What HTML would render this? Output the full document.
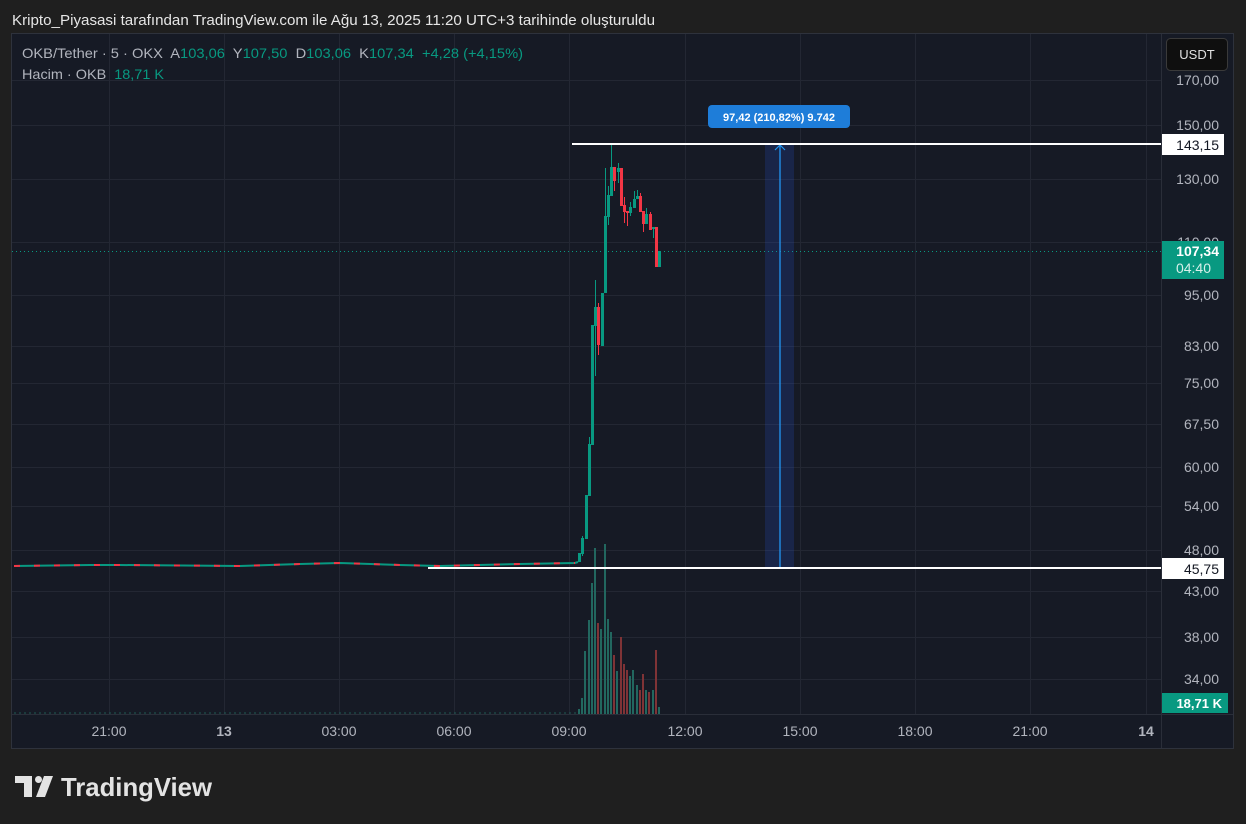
<!DOCTYPE html>
<html><head><meta charset="utf-8"><style>
html,body{margin:0;padding:0;background:#1f1f1f;}
svg{display:block;font-family:"Liberation Sans",sans-serif;}
text{white-space:pre;}
</style></head><body>
<svg width="1246" height="824" viewBox="0 0 1246 824" xmlns="http://www.w3.org/2000/svg" xml:space="preserve">
<rect width="1246" height="824" fill="#1f1f1f"/>
<text x="12" y="25" font-size="15" fill="#e6e6e6" textLength="643" lengthAdjust="spacingAndGlyphs">Kripto_Piyasasi tarafından TradingView.com ile Ağu 13, 2025 11:20 UTC+3 tarihinde oluşturuldu</text>
<rect x="11.5" y="33.5" width="1222" height="715" fill="#161a25" stroke="#2e323c"/>
<g stroke="#232733" stroke-width="1">
<line x1="12" x2="1161" y1="80.5" y2="80.5"/><line x1="12" x2="1161" y1="125.5" y2="125.5"/>
<line x1="12" x2="1161" y1="179.5" y2="179.5"/><line x1="12" x2="1161" y1="242.5" y2="242.5"/>
<line x1="12" x2="1161" y1="295.5" y2="295.5"/><line x1="12" x2="1161" y1="346.5" y2="346.5"/>
<line x1="12" x2="1161" y1="383.5" y2="383.5"/><line x1="12" x2="1161" y1="424.5" y2="424.5"/>
<line x1="12" x2="1161" y1="467.5" y2="467.5"/><line x1="12" x2="1161" y1="506.5" y2="506.5"/>
<line x1="12" x2="1161" y1="550.5" y2="550.5"/><line x1="12" x2="1161" y1="591.5" y2="591.5"/>
<line x1="12" x2="1161" y1="637.5" y2="637.5"/><line x1="12" x2="1161" y1="679.5" y2="679.5"/>
<line y1="34" y2="714" x1="109.5" x2="109.5"/><line y1="34" y2="714" x1="224.5" x2="224.5"/>
<line y1="34" y2="714" x1="339.5" x2="339.5"/><line y1="34" y2="714" x1="454.5" x2="454.5"/>
<line y1="34" y2="714" x1="569.5" x2="569.5"/><line y1="34" y2="714" x1="685.5" x2="685.5"/>
<line y1="34" y2="714" x1="800.5" x2="800.5"/><line y1="34" y2="714" x1="915.5" x2="915.5"/>
<line y1="34" y2="714" x1="1030.5" x2="1030.5"/><line y1="34" y2="714" x1="1146.5" x2="1146.5"/>
</g>
<line x1="1161.5" x2="1161.5" y1="34" y2="748" stroke="#2a2e39"/>
<line x1="12" x2="1233" y1="714.5" y2="714.5" stroke="#2a2e39"/>
<text x="22" y="58" font-size="14" fill="#b2b5be" textLength="501" lengthAdjust="spacingAndGlyphs">OKB/Tether · 5 · OKX  A<tspan fill="#089981">103,06</tspan>  Y<tspan fill="#089981">107,50</tspan>  D<tspan fill="#089981">103,06</tspan>  K<tspan fill="#089981">107,34  +4,28 (+4,15%)</tspan></text>
<text x="22" y="79" font-size="14" fill="#b2b5be" textLength="142" lengthAdjust="spacingAndGlyphs">Hacim · OKB  <tspan fill="#089981">18,71 K</tspan></text>
<line x1="14" x2="576" y1="713" y2="713" stroke="#1f5a54" stroke-width="1" stroke-dasharray="2 3"/>
<g fill="#22675f">
<rect x="578" y="709" width="2" height="5"/><rect x="581" y="698" width="2" height="16"/>
<rect x="584" y="651" width="2" height="63"/><rect x="588" y="620" width="2" height="94"/>
<rect x="591" y="583" width="2" height="131"/><rect x="594" y="548" width="2" height="166"/>
<rect x="600" y="629" width="2" height="85"/><rect x="604" y="544" width="2" height="170"/>
<rect x="607" y="619" width="2" height="95"/><rect x="610" y="632" width="2" height="82"/>
<rect x="616" y="671" width="2" height="43"/><rect x="629" y="676" width="2" height="38"/>
<rect x="632" y="670" width="2" height="44"/><rect x="636" y="685" width="2" height="29"/>
<rect x="645" y="690" width="2" height="24"/><rect x="652" y="690" width="2" height="24"/>
<rect x="658" y="707" width="2" height="7"/>
</g>
<g fill="#7f3336">
<rect x="597" y="623" width="2" height="91"/><rect x="613" y="655" width="2" height="59"/>
<rect x="620" y="637" width="2" height="77"/><rect x="623" y="664" width="2" height="50"/>
<rect x="626" y="670" width="2" height="44"/><rect x="639" y="690" width="2" height="24"/>
<rect x="642" y="674" width="2" height="40"/><rect x="648" y="692" width="2" height="22"/>
<rect x="655" y="650" width="2" height="64"/>
</g>
<polyline fill="none" stroke="#089981" stroke-width="2" points="14,566 90,565 120,565 240,566 300,564 340,563 400,565 440,566 520,564 575,563 578,562"/>
<polyline fill="none" stroke="#f23645" stroke-width="2" stroke-dasharray="6 14" points="14,566 90,565 120,565 240,566 300,564 340,563 400,565 440,566 520,564 575,563"/>
<line x1="12" x2="1161" y1="251.5" y2="251.5" stroke="#089981" stroke-dasharray="1 3"/>
<rect x="765" y="144" width="29" height="423" fill="#2962ff" fill-opacity="0.16"/>
<line x1="765" x2="794" y1="144.5" y2="144.5" stroke="#2196f3"/>
<line x1="780" x2="780" y1="145" y2="567" stroke="#2196f3" stroke-width="1.3"/>
<polyline points="775,150 780,145 785,150" fill="none" stroke="#2196f3" stroke-width="1.2"/>
<rect x="708" y="105" width="142" height="23" rx="4" fill="#1e7dd9"/>
<text x="779" y="121" font-size="11" font-weight="bold" fill="#ffffff" text-anchor="middle">97,42 (210,82%) 9.742</text>
<rect x="572" y="143" width="589" height="2" fill="#ffffff"/>
<rect x="428" y="567" width="733" height="2" fill="#ffffff"/>
<g fill="#089981" stroke="#089981">
<line x1="582.5" x2="582.5" y1="536" y2="556"/><line x1="589.5" x2="589.5" y1="437" y2="496"/>
<line x1="595.5" x2="595.5" y1="280" y2="376"/><line x1="605.5" x2="605.5" y1="168" y2="293"/>
<line x1="608.5" x2="608.5" y1="186" y2="225"/><line x1="611.5" x2="611.5" y1="145" y2="196"/>
<line x1="618.5" x2="618.5" y1="163" y2="183"/><line x1="630.5" x2="630.5" y1="202" y2="216"/>
<line x1="634.5" x2="634.5" y1="191" y2="208"/><line x1="637.5" x2="637.5" y1="190" y2="199"/>
<line x1="646.5" x2="646.5" y1="208" y2="224"/><line x1="653.5" x2="653.5" y1="227" y2="238"/>
</g>
<g fill="#089981">
<rect x="578" y="553" width="3" height="9"/><rect x="581" y="538" width="3" height="16"/>
<rect x="585" y="495" width="3" height="44"/><rect x="588" y="444" width="3" height="52"/>
<rect x="591" y="325" width="3" height="120"/><rect x="594" y="307" width="3" height="19"/>
<rect x="601" y="293" width="3" height="53"/><rect x="604" y="216" width="3" height="77"/>
<rect x="607" y="195" width="3" height="22"/><rect x="610" y="167" width="3" height="29"/>
<rect x="617" y="168" width="3" height="4"/><rect x="629" y="207" width="3" height="6"/>
<rect x="633" y="199" width="3" height="9"/><rect x="636" y="196" width="3" height="3"/>
<rect x="645" y="214" width="3" height="10"/><rect x="652" y="227" width="3" height="2"/>
<rect x="658" y="251" width="3" height="16"/>
</g>
<g stroke="#f23645">
<line x1="598.5" x2="598.5" y1="303" y2="355"/><line x1="614.5" x2="614.5" y1="167" y2="191"/>
<line x1="624.5" x2="624.5" y1="197" y2="223"/><line x1="627.5" x2="627.5" y1="211" y2="226"/>
<line x1="640.5" x2="640.5" y1="193" y2="212"/><line x1="643.5" x2="643.5" y1="211" y2="232"/>
<line x1="650.5" x2="650.5" y1="212" y2="230"/>
</g>
<g fill="#f23645">
<rect x="597" y="307" width="3" height="38"/><rect x="613" y="167" width="3" height="14"/>
<rect x="620" y="168" width="3" height="38"/><rect x="623" y="205" width="3" height="7"/>
<rect x="626" y="211" width="3" height="2"/><rect x="639" y="196" width="3" height="16"/>
<rect x="642" y="211" width="3" height="13"/><rect x="649" y="214" width="3" height="16"/>
<rect x="655" y="227" width="3" height="40"/>
</g>
<g font-size="14" fill="#b2b5be" text-anchor="end">
<text x="1219" y="85">170,00</text><text x="1219" y="130">150,00</text>
<text x="1219" y="184">130,00</text><text x="1219" y="247">110,00</text>
<text x="1219" y="300">95,00</text><text x="1219" y="351">83,00</text>
<text x="1219" y="388">75,00</text><text x="1219" y="429">67,50</text>
<text x="1219" y="472">60,00</text><text x="1219" y="511">54,00</text>
<text x="1219" y="555">48,00</text><text x="1219" y="596">43,00</text>
<text x="1219" y="642">38,00</text><text x="1219" y="684">34,00</text>
</g>
<rect x="1166.5" y="38.5" width="61" height="32" rx="4" fill="#0f0f0f" stroke="#3a3a3a"/>
<text x="1197" y="59" font-size="13" fill="#e0e0e0" text-anchor="middle">USDT</text>
<rect x="1162" y="134" width="62" height="21" fill="#ffffff"/>
<text x="1219" y="150" font-size="14" fill="#131722" text-anchor="end">143,15</text>
<rect x="1162" y="558" width="62" height="21" fill="#ffffff"/>
<text x="1219" y="574" font-size="14" fill="#131722" text-anchor="end">45,75</text>
<rect x="1162" y="241" width="62" height="38" fill="#089981"/>
<text x="1219" y="256" font-size="14" font-weight="bold" fill="#ffffff" text-anchor="end">107,34</text>
<text x="1211" y="273" font-size="14" fill="#d8f0ea" text-anchor="end">04:40</text>
<rect x="1162" y="693" width="66" height="20" fill="#089981"/>
<text x="1222" y="708" font-size="13" font-weight="bold" fill="#ffffff" text-anchor="end">18,71 K</text>
<g font-size="14" fill="#b2b5be" text-anchor="middle">
<text x="109" y="736">21:00</text><text x="224" y="736" font-weight="bold">13</text>
<text x="339" y="736">03:00</text><text x="454" y="736">06:00</text>
<text x="569" y="736">09:00</text><text x="685" y="736">12:00</text>
<text x="800" y="736">15:00</text><text x="915" y="736">18:00</text>
<text x="1030" y="736">21:00</text><text x="1146" y="736" font-weight="bold">14</text>
</g>
<g fill="#e3e3e3">
<rect x="15" y="776" width="17" height="7"/>
<rect x="24" y="776" width="8" height="21"/>
<circle cx="38.5" cy="779.5" r="3.5"/>
<polygon points="44,776 53,776 45,797 36,797"/>
</g>
<text x="61" y="796" font-size="26" font-weight="bold" fill="#e3e3e3" textLength="151" lengthAdjust="spacingAndGlyphs">TradingView</text>
</svg>
</body></html>
